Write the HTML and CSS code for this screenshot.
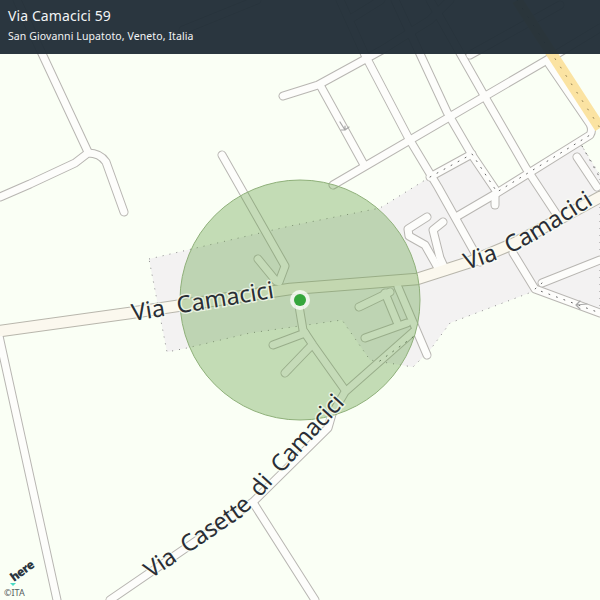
FILE: index.html
```html
<!DOCTYPE html>
<html lang="it">
<head>
<meta charset="utf-8">
<title>Via Camacici 59</title>
<link rel="stylesheet" href="styles.css">
</head>
<body>
<main class="map">
<svg class="map-canvas" width="600" height="600" viewBox="0 0 600 600" xmlns="http://www.w3.org/2000/svg">
  <defs>
    <g id="minor">
      <path d="M17 0 L88 152"/>
      <path d="M0 197 L30 184 L75 163 L88 153 Q100 153 106 162 L124 212"/>
      <path d="M-1 336 L57 600"/>
      <path d="M254 504 L315 600"/>
      <path d="M110 600 L253 502 L328 428 L332 414 L345 392 L413 332"/>
      <path d="M222 155 L285 266 L279 282"/>
      <path d="M258 259 L276 281"/>
      <path d="M298 300 L303 330 L313 345 L345 390"/>
      <path d="M305 333 L273 345"/>
      <path d="M310 347 L285 373"/>
      <path d="M398 287 L427 355"/>
      <path d="M407 323 L365 338"/>
      <path d="M390 292 L359 307"/>
      <path d="M385 293 L397 322"/>
      <path d="M427 217 L408 229 L409 236 L425 245 L438 268"/>
      <path d="M443 222 L433 230 L440 258 L446 271"/>
      <path d="M283 96 L318 85 L382 50 L430 20 L450 0"/>
      <path d="M333 185 L547 60 L600 28"/>
      <path d="M183 30 L257 0"/>
      <path d="M352 18 L381 0"/>
      <path d="M320 85 L363 163"/>
      <path d="M340 0 L365 55 L408 137 L438 187 L480 262"/>
      <path d="M395 0 L447 112 L472 155 L497 192"/>
      <path d="M430 0 L485 97 L526 168 L557 215"/>
      <path d="M456 217 L497 193 L590 135 Q593 130 590 124 L549 64"/>
      <path d="M430 177 L472 154"/>
      <path d="M495 195 L495 205"/>
      <path d="M577 157 L597 187"/>
      <path d="M513 253 L535 289 L600 313"/>
      <path d="M542 283 L600 260"/>
      <path d="M560 5 L470 55"/>
    </g>
    <g id="major">
      <path d="M0 331 L130 313 L290 289 L417 279 L470 262 L515 243 L600 197"/>
    </g>
    <path id="label-left" d="M133 321 L285 296"/>
    <path id="label-right" d="M467 270 L502 258 L540 238 L610 194"/>
    <path id="label-diag" d="M151 579 L240 518 Q255 505 265 492 L350 398"/>
  </defs>

  <rect class="ground" width="600" height="600"/>
  <polygon class="lot" points="149,259 290,226 380,208 430,177 470,153 497,190 527,173 580,143 600,175 600,313 537,290 450,323 430,350 413,367 370,360 342,320 250,333 187,348 167,352"/>

  <use href="#minor" class="casing"/>
  <use href="#major" class="casing-major"/>
  <use href="#minor" class="fill"/>
  <use href="#major" class="fill-major"/>
  <path class="rail-base" d="M517 0 L600 128"/>
  <path class="rail-dots" d="M517 0 L600 128"/>
  <g class="dots">
    <path d="M430 177 L472 154 L497 192 L590 135"/>
    <path d="M542 283 L535 289 L600 313"/>
    <path d="M413 337 L377 363"/>
    <path d="M582 146 L600 178"/>
  </g>
  <path class="arrow" d="M340 122 L345 130 L349 127 M341 130 L345 130 L345 126"/>
  <path class="arrow" d="M587 304 L576 305 L580 301 M576 305 L580 309"/>

  <circle class="accuracy" cx="300" cy="300" r="120"/>

  <text class="road-label"><textPath href="#label-left">Via&#160;&#160;Camacici</textPath></text>
  <text class="road-label"><textPath href="#label-right">Via&#160;&#160;Camacici</textPath></text>
  <text class="road-label label-narrow"><textPath href="#label-diag">Via&#160;&#160;Casette&#160;&#160;di&#160;&#160;Camacici</textPath></text>

  <circle class="pin-halo" cx="300" cy="300" r="10"/>
  <circle class="pin-dot" cx="300" cy="300" r="6"/>

  <polygon class="here-mark" points="10,583 16,583 13,586"/>
  <text class="here-text" transform="translate(14 582) rotate(-36)">here</text>
  <text class="copyright" x="4" y="596">©ITA</text>
</svg>
<header class="place">
  <h1 class="place-name">Via Camacici 59</h1>
  <p class="place-area">San Giovanni Lupatoto, Veneto, Italia</p>
</header>
</main>
</body>
</html>
```
FILE: styles.css
```css
html, body {
  margin: 0;
  padding: 0;
}

.map {
  position: relative;
  width: 600px;
  height: 600px;
  overflow: hidden;
  font-family: "Noto Sans", "Open Sans", sans-serif;
}

.map-canvas {
  display: block;
}

.ground { fill: #faFFF5; }

.lot {
  fill: #f3f2f2;
  stroke: #8a8a8a;
  stroke-width: 1;
  stroke-dasharray: 1 6;
}

.casing, .casing-major, .fill, .fill-major, .rail-base, .rail-dots, .dots, .arrow {
  fill: none;
  stroke-linecap: round;
  stroke-linejoin: round;
}

.casing { stroke: #b8b6b2; stroke-width: 9; }
.fill { stroke: #fdfdfb; stroke-width: 7; }
.casing-major { stroke: #b8b6ac; stroke-width: 12.5; }
.fill-major { stroke: #fbf8ee; stroke-width: 10.5; }

.rail-base { stroke: #fbe3a2; stroke-width: 11; stroke-linecap: butt; }
.rail-dots { stroke: #8f7f52; stroke-width: 1; stroke-dasharray: 1 9; }

.dots {
  stroke: #666;
  stroke-width: 1;
  stroke-dasharray: 1 7;
}

.arrow { stroke: #a8a8a8; stroke-width: 1.2; }

.accuracy {
  fill: rgb(100, 160, 70);
  fill-opacity: 0.37;
  stroke: #8fb07a;
  stroke-width: 1;
}

.road-label {
  font-family: "Noto Sans", "Open Sans", sans-serif;
  font-size: 23.5px;
  fill: #2a2e35;
  stroke: rgba(251, 255, 245, 0.7);
  stroke-width: 3;
  paint-order: stroke;
}

.label-narrow { letter-spacing: -0.3px; }

.pin-halo { fill: #fff; fill-opacity: 0.75; }
.pin-dot { fill: #35a63c; }

.here-mark { fill: #48dac3; }

.here-text {
  font-family: "Open Sans", sans-serif;
  font-size: 12px;
  font-weight: 800;
  letter-spacing: -0.6px;
  fill: #2a3540;
}

.copyright {
  font-family: "Noto Sans", sans-serif;
  font-size: 9px;
  fill: #555c60;
}

.place {
  position: absolute;
  top: 0;
  left: 0;
  right: 0;
  box-sizing: border-box;
  height: 54px;
  padding: 6px 8px;
  background: rgba(33, 46, 55, 0.96);
  color: #f2f4f5;
}

.place-name {
  margin: 0;
  font-size: 14px;
  font-weight: 400;
  line-height: 19px;
  letter-spacing: 0.1px;
}

.place-area {
  margin: 4px 0 0;
  font-size: 10.5px;
  line-height: 15px;
  letter-spacing: 0.1px;
}
```
